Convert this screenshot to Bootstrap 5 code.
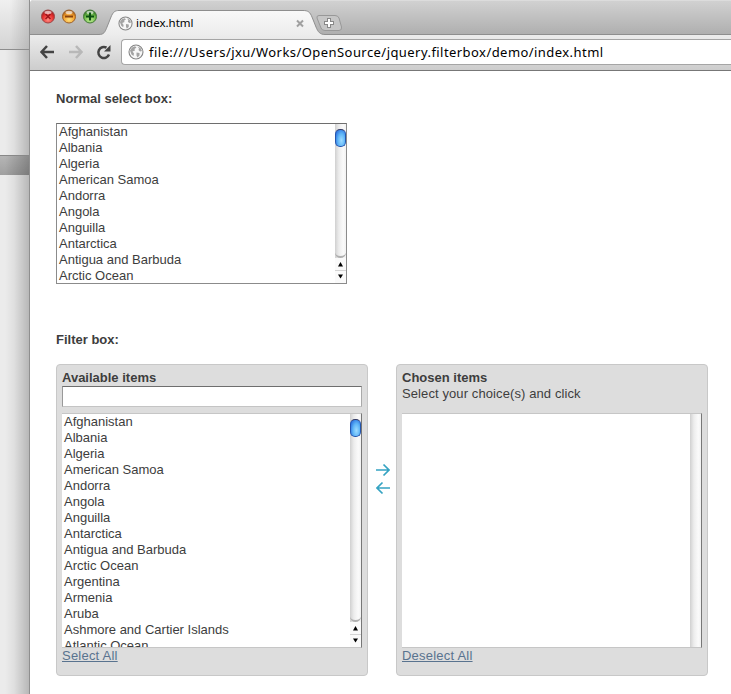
<!DOCTYPE html>
<html lang="en">
<head>
<meta charset="utf-8">
<title>index.html</title>
<link href="https://cdn.jsdelivr.net/npm/bootstrap@5.3.0/dist/css/bootstrap.min.css" rel="stylesheet">
<style>
body{font:13px/16px "Liberation Sans",Arial,sans-serif;color:#3d3d3d;background:#fff}
.screen{width:731px;height:694px}
.behind{width:29px;background:linear-gradient(90deg,transparent 5px,rgba(0,0,0,.05) 14px,rgba(0,0,0,.22)),#ebebeb}
.behind-top{height:50px;border-bottom:1px solid #8d8d8d;background:linear-gradient(#f0f0f0,#d8d8d8)}
.behind-top{background:linear-gradient(90deg,transparent 10px,rgba(0,0,0,.13)),linear-gradient(#f0f0f0,#d4d4d4)}
.behind-bar{margin-top:105px;height:20px;border-top:1px solid #888;background:linear-gradient(90deg,transparent 5px,rgba(0,0,0,.24)),linear-gradient(#b5b5b5,#a0a0a0)}
.window{width:702px;border-left:1px solid #8f8f8f}
.chrome{border-top-left-radius:4px;overflow:hidden;background:#c0c0c0;font-family:"Noto Sans","Open Sans",sans-serif;color:#000}
.strip{height:35px}
.shape{left:-1px;top:0;z-index:0}
.lights{margin-left:11px;margin-top:9px;gap:5px;z-index:1}
.lights svg,.tab-label svg{display:block}
.tab-label{margin-left:19px;margin-top:14px;width:187px;height:18px;font-size:11.5px;z-index:1}
.tab-text{margin-left:3px}
.toolbar{height:36px;padding:0 0 2px 9px;border-bottom:1px solid #777;background:linear-gradient(#ececec,#cdcdcd)}
.address{height:26px;margin-left:8px;border:1px solid #a5a5a5;border-right:0;border-radius:4px 0 0 4px;background:#fff;padding-left:6px;font-size:13px}
.url{margin-left:5px;letter-spacing:.44px}
.content{padding:20px 0 0 26px}
.caption{height:16px;margin:0}
.listbox{background:#fff;display:flex;overflow:hidden}
.listbox ul{overflow:hidden;flex:1;padding-left:2px}
.listbox li{height:16px;white-space:nowrap}
.normal{width:291px;height:161px;margin:16px 0 48px;border:1px solid #8b8b8b;border-top-color:#6e6e6e}
.panel{width:312px;height:312px;padding:5px;background:#ddd;border:1px solid #c8c8c8;border-radius:4px}
.panel .listbox{width:300px;height:235px;border:solid #c6c6c6;border-width:1px 0;border-right:1px solid #777}
.filter-input{width:300px;height:21px;margin-bottom:6px;padding:0;border:1px solid #c4c4c4;border-top:1px solid #6e6e6e;border-left-color:#999;border-right-color:#aaa;background:#fff;display:block}
.hint{height:27px;letter-spacing:.1px}
.panel a{color:#59738f;letter-spacing:.22px}
.track{width:11px;background:linear-gradient(90deg,#d0d0d0,#ececec 35%,#fafafa 75%,#f2f2f2)}
.thumb{width:11px;height:18px;margin-top:5px;border:1px solid #2455ad;border-top-color:#333b66;border-radius:5px;background:radial-gradient(ellipse at 60% 65%,#9fdcff 0,#5fb6f7 45%,#2669dc 90%)}
.track-end{height:6px;border-bottom:2px solid #b0b0b0;border-radius:0 0 6px 6px}
.steppers{height:25px;background:#fafafa}
.steppers svg{display:block}
.arrows{width:28px;padding:98px 0 0 1px}
</style>
<script src="https://cdn.jsdelivr.net/npm/bootstrap@5.3.0/dist/js/bootstrap.bundle.min.js"></script>
</head>
<body>
<svg width="0" height="0" class="position-absolute">
<defs>
<linearGradient id="stripFill" x1="0" y1="0" x2="0" y2="1"><stop stop-color="#d2d2d2"/><stop offset="1" stop-color="#aeaeae"/></linearGradient>
<linearGradient id="tabFill" x1="0" y1="0" x2="0" y2="1"><stop stop-color="#f9f9f9"/><stop offset="1" stop-color="#ececec"/></linearGradient>
<radialGradient id="redFill" cx=".5" cy=".75" r=".7"><stop stop-color="#ff8d83"/><stop offset=".6" stop-color="#e8302f"/><stop offset="1" stop-color="#981c20"/></radialGradient>
<radialGradient id="amberFill" cx=".5" cy=".75" r=".7"><stop stop-color="#ffe07b"/><stop offset=".6" stop-color="#f5a12f"/><stop offset="1" stop-color="#9f5713"/></radialGradient>
<radialGradient id="greenFill" cx=".5" cy=".75" r=".7"><stop stop-color="#caf29a"/><stop offset=".6" stop-color="#6fbe4b"/><stop offset="1" stop-color="#2b6a20"/></radialGradient>
<symbol id="globe" viewBox="0 0 16 16"><circle cx="8" cy="8" r="7" fill="#f7f7f7" stroke="#858585" stroke-width="1.1"/><path d="M2 6.500 4 3.500 7 2.300 8.500 3.500 6.500 5 7 6.500 4.500 7.500 6 9.500 5.500 12 3.500 10.500zM9.500 2.500 12.500 4 14 7 12 7.500 10.500 6 11 4.500zM8.500 8.500 11.500 9 11.500 11.500 9.500 13.500 8.500 11.500z" fill="#a3a3a3"/></symbol>
<symbol id="steps" viewBox="0 0 11 25"><path d="M0 12.500h11" stroke="#d4d4d4"/><path d="M5.500 4 8 8.500H3zM5.500 20.500 8 16.500H3z" fill="#000"/></symbol>
</defs>
</svg>
<div class="screen d-flex overflow-hidden">
<aside class="behind flex-shrink-0"><div class="behind-top"></div><div class="behind-bar"></div></aside>
<div class="window d-flex flex-column flex-shrink-0">
<header class="chrome">
<div class="strip d-flex align-items-start position-relative">
<svg class="shape position-absolute" width="702" height="35">
<path d="M0 0H702V35H0z" fill="url(#stripFill)"/><path d="M0 .5H702" stroke="#dcdcdc"/>
<path d="M0 35V34.500H70C75 34.500 76 32 78 27L82 17C84 12 86 10.500 90 10.500H274C279 10.500 281 12 283 17L287 27C289 32 291 34.500 296 34.500H702V35z" fill="url(#tabFill)"/>
<path d="M0 34.500H70C75 34.500 76 32 78 27L82 17C84 12 86 10.500 90 10.500H274C279 10.500 281 12 283 17L287 27C289 32 291 34.500 296 34.500H702" fill="none" stroke="#8e8e8e"/>
<path d="M290 15.500H306Q309 15.500 310 18L312.500 27Q313 30.500 310 30.500H296Q293 30.500 292 28L288 18Q287.500 15.500 290 15.500z" fill="#c6c6c6" stroke="#989898"/>
<path d="M300 18v10M295 23h10" stroke="#888" stroke-width="4"/><path d="M300 19v8M296 23h8" stroke="#fff" stroke-width="2"/>
</svg>
<div class="lights d-flex position-relative">
<svg width="16" height="16"><circle cx="7" cy="7.500" r="6.500" fill="url(#redFill)" stroke="#9d4646"/><ellipse cx="7" cy="3.500" rx="3.500" ry="1.800" fill="#fff" opacity=".65"/><path d="M4.500 5 9.500 10M9.500 5 4.500 10" stroke="#a0151a" stroke-width="1.500"/></svg>
<svg width="16" height="16"><circle cx="7" cy="7.500" r="6.500" fill="url(#amberFill)" stroke="#9a602c"/><ellipse cx="7" cy="3.500" rx="3.500" ry="1.800" fill="#fff" opacity=".65"/><path d="M3 7.500h8" stroke="#8a420d" stroke-width="2"/></svg>
<svg width="16" height="16"><circle cx="7" cy="7.500" r="6.500" fill="url(#greenFill)" stroke="#447a38"/><ellipse cx="7" cy="3.500" rx="3.500" ry="1.800" fill="#fff" opacity=".65"/><path d="M3 7.500h8M7 3.500v8" stroke="#0b5011" stroke-width="2.200"/></svg>
</div>
<div class="tab-label d-flex align-items-center position-relative">
<svg width="15" height="15"><use href="#globe"/></svg><span class="tab-text">index.html</span>
<svg class="ms-auto" width="9" height="9"><path d="M1 1.500 7 7.500M7 1.500 1 7.500" stroke="#a0a0a0" stroke-width="2"/></svg>
</div>
</div>
<div class="toolbar d-flex align-items-center">
<svg width="74" height="18"><path d="M8 3 2.500 9 8 15M3 9H15" fill="none" stroke="#444" stroke-width="2.500"/><path d="M37 3 42.500 9 37 15M42 9H30" fill="none" stroke="#b8b8b8" stroke-width="2.500"/><path d="M70 11.500A5.500 5.500 0 1 1 67.500 4.700" fill="none" stroke="#444" stroke-width="2.500"/><path d="M71.500 2V8.500H65z" fill="#444"/></svg>
<div class="address d-flex align-items-center flex-fill">
<svg width="16" height="16"><use href="#globe"/></svg><span class="url text-nowrap">file:///Users/jxu/Works/OpenSource/jquery.filterbox/demo/index.html</span>
</div>
</div>
</header>
<main class="content">
<p class="caption fw-bold">Normal select box:</p>
<div class="listbox normal">
<ul class="list-unstyled mb-0"><li>Afghanistan</li><li>Albania</li><li>Algeria</li><li>American Samoa</li><li>Andorra</li><li>Angola</li><li>Anguilla</li><li>Antarctica</li><li>Antigua and Barbuda</li><li>Arctic Ocean</li></ul>
<div class="track d-flex flex-column"><div class="thumb"></div><div class="track-end mt-auto"></div><div class="steppers"><svg width="11" height="25"><use href="#steps"/></svg></div></div>
</div>
<p class="caption fw-bold">Filter box:</p>
<div class="d-flex mt-3">
<section class="panel">
<p class="caption fw-bold">Available items</p>
<input class="filter-input" type="text" aria-label="Filter">
<div class="listbox">
<ul class="list-unstyled mb-0"><li>Afghanistan</li><li>Albania</li><li>Algeria</li><li>American Samoa</li><li>Andorra</li><li>Angola</li><li>Anguilla</li><li>Antarctica</li><li>Antigua and Barbuda</li><li>Arctic Ocean</li><li>Argentina</li><li>Armenia</li><li>Aruba</li><li>Ashmore and Cartier Islands</li><li>Atlantic Ocean</li></ul>
<div class="track d-flex flex-column"><div class="thumb"></div><div class="track-end mt-auto"></div><div class="steppers"><svg width="11" height="25"><use href="#steps"/></svg></div></div>
</div>
<a class="d-inline-block" href="#">Select All</a>
</section>
<div class="arrows"><svg class="d-block mx-auto" width="14" height="34" fill="none" stroke="#35a3c2" stroke-width="1.700"><path d="M0 8H13M7.500 2.500 13 8 7.500 13.500M14 26H1M6.500 20.500 1 26 6.500 31.500"/></svg></div>
<section class="panel">
<p class="caption fw-bold">Chosen items</p>
<div class="hint">Select your choice(s) and click</div>
<div class="listbox"><ul class="list-unstyled mb-0"></ul><div class="track"></div></div>
<a class="d-inline-block" href="#">Deselect All</a>
</section>
</div>
</main>
</div>
</div>
</body>
</html>
